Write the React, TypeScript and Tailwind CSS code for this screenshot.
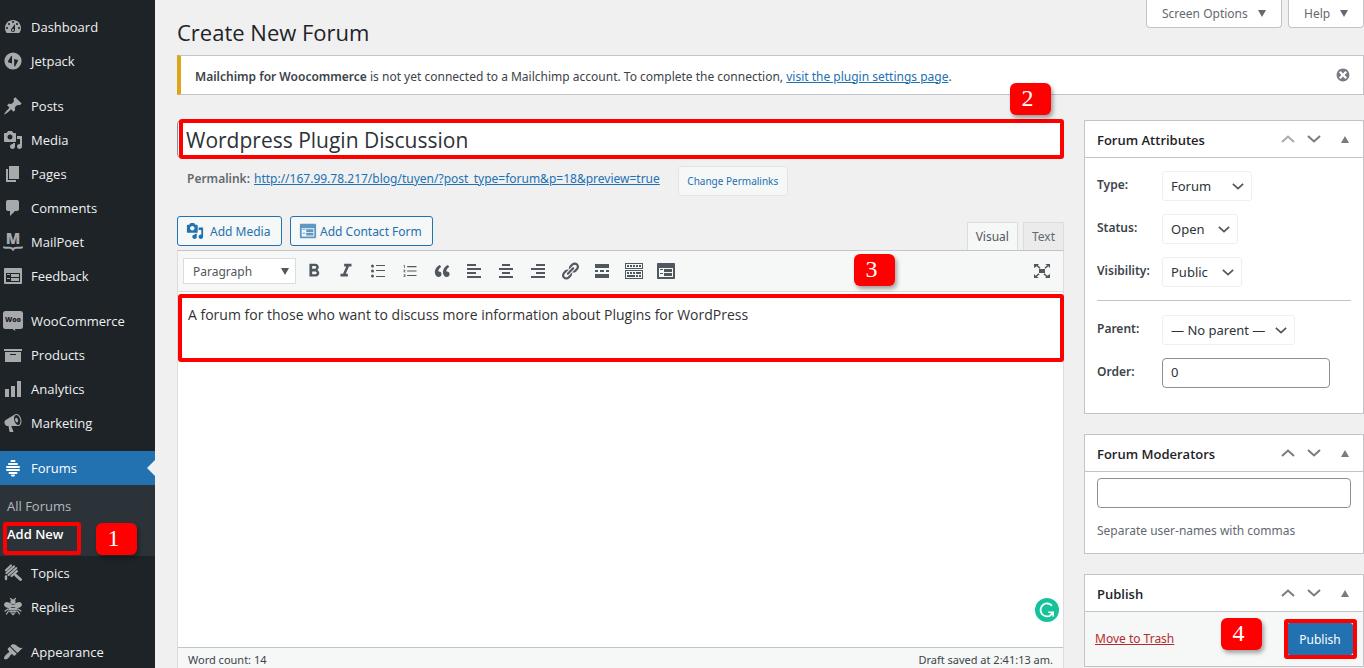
import React from 'react';
import { AiOutlineOrderedList } from 'react-icons/ai';
import { MdFormatBold, MdFormatItalic } from 'react-icons/md';

type IconProps = { className?: string };

const PATHS = {
  dashboard:
    'M3.76 16h12.48c1.1-1.37 1.76-3.11 1.76-5 0-4.42-3.58-8-8-8s-8 3.58-8 8c0 1.89.66 3.63 1.76 5zM10 4c.55 0 1 .45 1 1s-.45 1-1 1-1-.45-1-1 .45-1 1-1zM6 6c.55 0 1 .45 1 1s-.45 1-1 1-1-.45-1-1 .45-1 1-1zm8 0c.55 0 1 .45 1 1s-.45 1-1 1-1-.45-1-1 .45-1 1-1zm-5.37 5.55L12 7v6c0 1.1-.9 2-2 2s-2-.9-2-2c0-.57.24-1.08.63-1.45zM4 10c.55 0 1 .45 1 1s-.45 1-1 1-1-.45-1-1 .45-1 1-1zm12 0c.55 0 1 .45 1 1s-.45 1-1 1-1-.45-1-1 .45-1 1-1zm-5 3c0-.55-.45-1-1-1s-1 .45-1 1 .45 1 1 1 1-.45 1-1z',
  pin: 'M10.44 3.02l1.82-1.82 6.36 6.35-1.83 1.82c-1.05-.68-2.48-.57-3.41.36l-.75.75c-.92.93-1.04 2.35-.35 3.41l-1.83 1.82-2.41-2.41-2.8 2.79c-.42.42-3.38 2.71-3.8 2.29s1.86-3.39 2.28-3.81l2.79-2.79L4.1 9.36l1.83-1.82c1.05.69 2.48.57 3.4-.36l.75-.75c.93-.92 1.05-2.35.36-3.41z',
  media:
    'M13 11V4c0-.55-.45-1-1-1h-1.67L9 1H5L3.67 3H2c-.55 0-1 .45-1 1v7c0 .55.45 1 1 1h10c.55 0 1-.45 1-1zM7 4.5c1.38 0 2.5 1.12 2.5 2.5S8.38 9.5 7 9.5 4.5 8.38 4.5 7 5.62 4.5 7 4.5zM14 6h5v10.5c0 1.38-1.12 2.5-2.5 2.5S14 17.88 14 16.5s1.12-2.5 2.5-2.5c.17 0 .34.02.5.05V9h-3V6zm-4 8.05V13h2v3.5c0 1.38-1.12 2.5-2.5 2.5S7 17.88 7 16.5 8.12 14 9.5 14c.17 0 .34.02.5.05z',
  page: 'M6 15V2h10v13H6zm-1 1h8v2H3V5h2v11z',
  comments: 'M5 2h9c1.1 0 2 .9 2 2v7c0 1.1-.9 2-2 2h-2l-5 5v-5H5c-1.1 0-2-.9-2-2V4c0-1.1.9-2 2-2z',
  feedback:
    'M2 2h16c.55 0 1 .45 1 1v14c0 .55-.45 1-1 1H2c-.55 0-1-.45-1-1V3c0-.55.45-1 1-1zm15 14V7H3v9h14zM4 8v1h3V8H4zm4 0v3h8V8H8zm-4 4v1h3v-1H4zm4 0v3h8v-3H8z',
  archive: 'M19 4v2H1V4h18zM2 7h16v10H2V7zm11 3V9H7v1h6z',
  chart: 'M18 18V2h-4v16h4zm-6 0V7H8v11h4zm-6 0v-8H2v8h4z',
  megaphone:
    'M18.15 5.94c.46 1.62.38 3.22-.02 4.48-.42 1.28-1.26 2.18-2.3 2.48-.16.06-.26.06-.4.06-.06.02-.12.02-.18.02-.06.02-.14.02-.22.02h-6.8l2.22 5.5c.02.14-.06.26-.14.34-.08.1-.24.16-.34.16H6.95c-.1 0-.26-.06-.34-.16-.08-.08-.16-.2-.14-.34l-1-5.5H4.25l-.02-.02c-.5.06-1.08-.18-1.54-.62s-.88-1.08-1.06-1.88c-.24-.8-.2-1.56-.02-2.2.18-.62.58-1.08 1.06-1.3l.02-.02 9-5.4c.1-.06.18-.1.24-.16.06-.04.14-.08.24-.12.16-.08.28-.12.5-.18 1.04-.3 2.24.1 3.22.98s1.84 2.24 2.26 3.86zm-2.58 5.98h-.02c.4-.1.74-.34 1.04-.7.58-.7.86-1.76.86-3.04 0-.64-.1-1.3-.28-1.98-.34-1.36-1.02-2.5-1.78-3.24s-1.68-1.1-2.46-.88c-.82.22-1.4.96-1.7 2-.32 1.04-.28 2.36.06 3.72.38 1.36 1 2.5 1.8 3.24.78.74 1.62 1.1 2.48.88zm-2.54-7.08c.22-.04.42-.02.62.04.38.16.76.48 1.02 1s.42 1.2.42 1.78c0 .3-.04.56-.12.8-.18.48-.44.84-.86.94-.34.1-.8-.06-1.14-.4s-.64-.86-.78-1.5c-.18-.62-.12-1.24.02-1.72s.48-.84.82-.94z',
  appearance:
    'M14.48 11.06L7.41 3.99l1.5-1.5c.5-.56 2.3-.47 3.51.32 1.21.8 1.43 1.28 2.91 2.1 1.18.64 2.45 1.26 4.45.85zm-.71.71L6.7 4.7 4.93 6.47c-.39.39-.39 1.02 0 1.41l1.06 1.06c.39.39.39 1.03 0 1.42-.6.6-1.43 1.11-2.21 1.69-.35.26-.7.53-1.01.84C1.43 14.23.4 16.08 1.4 17.07c.99 1 2.84-.03 4.18-1.36.31-.31.58-.66.85-1.02.57-.78 1.08-1.61 1.69-2.21.39-.39 1.02-.39 1.41 0l1.06 1.06c.39.39 1.02.39 1.41 0z',
  quote:
    'M9.49 13.22c0-.74-.2-1.38-.61-1.9-.62-.78-1.83-.88-2.53-.72-.29-1.65 1.11-3.75 2.92-4.65L7.88 4c-2.73 1.3-5.42 4.28-4.96 8.05C3.21 14.43 4.59 16 6.54 16c.85 0 1.56-.25 2.12-.75s.83-1.18.83-2.03zm8.05 0c0-.74-.2-1.38-.61-1.9-.63-.78-1.83-.88-2.53-.72-.29-1.65 1.11-3.75 2.92-4.65L15.93 4c-2.73 1.3-5.41 4.28-4.95 8.05.29 2.38 1.66 3.95 3.61 3.95.85 0 1.56-.25 2.12-.75s.83-1.18.83-2.03z',
  alignLeft: 'M12 5V3H3v2h9zm5 4V7H3v2h14zm-5 4v-2H3v2h9zm5 4v-2H3v2h14z',
  alignCenter: 'M14 5V3H6v2h8zm3 4V7H3v2h14zm-3 4v-2H6v2h8zm3 4v-2H3v2h14z',
  alignRight: 'M17 5V3H8v2h9zm0 4V7H3v2h14zm0 4v-2H8v2h9zm0 4v-2H3v2h14z',
  link: 'M17.74 2.76c1.68 1.69 1.68 4.41 0 6.1l-1.53 1.52c-1.12 1.12-2.7 1.47-4.14 1.09l2.62-2.61.76-.77.76-.76c.84-.84.84-2.2 0-3.04-.84-.85-2.2-.85-3.04 0l-.77.76-3.38 3.38c-.37-1.44-.02-3.02 1.1-4.14l1.52-1.53c1.69-1.68 4.42-1.68 6.1 0zM8.59 13.43l5.34-5.34c.42-.42.42-1.1 0-1.52-.44-.43-1.13-.39-1.53 0l-5.33 5.34c-.42.42-.42 1.1 0 1.52.44.43 1.13.39 1.52 0zm-.76 2.29l4.14-4.15c.38 1.44.03 3.02-1.09 4.14l-1.52 1.53c-1.69 1.68-4.41 1.68-6.1 0-1.68-1.68-1.68-4.42 0-6.1l1.53-1.52c1.12-1.12 2.7-1.47 4.14-1.1l-4.14 4.15c-.85.84-.85 2.2 0 3.05.84.84 2.2.84 3.04 0z',
  more: 'M17 7V3H3v4h14zM6 11V9H3v2h3zm6 0V9H8v2h4zm5 0V9h-3v2h3zm0 6v-4H3v4h14z',
  kitchenSink:
    'M19 2v6H1V2h18zm-1 5V3H2v4h16zM5 4v2H3V4h2zm3 0v2H6V4h2zm3 0v2H9V4h2zm3 0v2h-2V4h2zm3 0v2h-2V4h2zm2 5v9H1V9h18zm-1 8v-7H2v7h16zM5 11v2H3v-2h2zm3 0v2H6v-2h2zm3 0v2H9v-2h2zm6 0v2h-5v-2h5zm-6 3v2H3v-2h8zm3 0v2h-2v-2h2zm3 0v2h-2v-2h2z',
  fullscreen:
    'M2 3h5L5.8 4.200l2.800 2.500-1.100 1.100-2.800-2.500L2 7V3zm11 0h5v4l-1.700-1.700-2.800 2.500-1.100-1.100 2.800-2.500L13 3zM2 17v-4l1.700 1.700 2.800-2.500 1.100 1.100-2.800 2.500L7 17H2zm16 0h-5l1.200-1.200-2.800-2.500 1.100-1.100 2.800 2.500L18 13v4zM7 8h6v4H7V8z',
  dismiss:
    'M10 2c4.42 0 8 3.58 8 8s-3.58 8-8 8-8-3.58-8-8 3.58-8 8-8zm5 11l-3-3 3-3-2-2-3 3-3-3-2 2 3 3-3 3 2 2 3-3 3 3z',
};

const Dashicon = ({ name, className = 'size-5' }: { name: keyof typeof PATHS; className?: string }) => (
  <svg className={className} viewBox="0 0 20 20" fill="currentColor" aria-hidden="true">
    <path d={PATHS[name]} />
  </svg>
);

const JetpackIcon = () => (
  <svg className="size-5" viewBox="0 0 20 20" fill="currentColor" aria-hidden="true">
    <path
      fillRule="evenodd"
      d="M10 1.400a8.600 8.600 0 1 0 0 17.200 8.600 8.600 0 0 0 0-17.200zM9 5v7.400l-3.200-.8c-.8-.2-1.100-.8-.7-1.500L8 5.200zM11.200 15.500V8l2.900.7c.8.2 1.100.8.7 1.500L12.200 15.300z"
    />
  </svg>
);

const MailPoetIcon = () => (
  <svg className="size-5 overflow-visible" viewBox="0 0 20 20" fill="currentColor" aria-hidden="true">
    <text x="10" y="12" textAnchor="middle" fontFamily="Open Sans, sans-serif" fontWeight="800" fontSize="15">
      M
    </text>
    <path
      d="M1 15.300c2.400 1.400 5.600-.4 7.700.9l1.300 1.600 1.300-1.600c2.100-1.300 5.300.5 7.700-.9"
      fill="none"
      stroke="currentColor"
      strokeWidth="2"
      strokeLinecap="round"
      strokeLinejoin="round"
    />
  </svg>
);

const WooIcon = () => (
  <svg className="size-5" viewBox="0 0 20 20" fill="currentColor" aria-hidden="true">
    <path d="M2.500 0h15A2.500 2.500 0 0 1 20 2.500v13a2.500 2.500 0 0 1-2.500 2.500H12l.3 2L9.500 18h-7A2.500 2.500 0 0 1 0 15.500v-13A2.500 2.500 0 0 1 2.500 0z" />
    <text
      x="10"
      y="11"
      textAnchor="middle"
      fontFamily="Open Sans, sans-serif"
      fontWeight="800"
      fontSize="7"
      fill="#1d2327"
    >
      Woo
    </text>
  </svg>
);

const HiveIcon = () => (
  <svg
    className="size-5"
    viewBox="0 0 20 20"
    fill="none"
    stroke="currentColor"
    strokeWidth="2"
    strokeLinecap="round"
    aria-hidden="true"
  >
    <path d="M8.500 3h3M6 6h8M4 9h12M4 12h12M6.500 15h7M9 17.500h2" />
  </svg>
);

const TopicsIcon = () => (
  <svg className="size-5" viewBox="0 0 20 20" fill="none" stroke="currentColor" strokeLinecap="round" aria-hidden="true">
    <path d="M3 7.200L8 2.500M3.500 10l7.500-6.500M5.500 12L13.200 5.200M8.500 13L14 8.200" strokeWidth="2.200" />
    <path d="M12.500 12l5 4.500" strokeWidth="3" />
    <path d="M3 13.500v2.500" strokeWidth="2.400" />
  </svg>
);

const BeeIcon = () => (
  <svg className="size-5" viewBox="0 0 20 20" fill="currentColor" aria-hidden="true">
    <circle cx="10" cy="4.800" r="2.600" />
    <path d="M9 3L7.500 1.500M11 3l1.500-1.500" stroke="currentColor" strokeWidth="1.200" strokeLinecap="round" />
    <ellipse cx="5" cy="8.200" rx="4" ry="2.800" transform="rotate(20 5 8.200)" />
    <ellipse cx="15" cy="8.200" rx="4" ry="2.800" transform="rotate(-20 15 8.200)" />
    <path d="M6.500 8h7v2h-7zM5.600 10.700h8.800v2.200H5.600zM6 13.600h8l-.8 2H6.800zM7.500 16.300h5L10 18.600z" />
    <path d="M5 12l-3 2M15 12l3 2M5.500 14l-2 3M14.500 14l2 3" stroke="currentColor" strokeWidth="1.300" strokeLinecap="round" />
  </svg>
);

const BulletListIcon = () => (
  <svg className="size-5" viewBox="0 0 20 20" fill="currentColor" aria-hidden="true">
    <circle cx="4.500" cy="5" r="1.500" />
    <circle cx="4.500" cy="10" r="1.500" />
    <circle cx="4.500" cy="15" r="1.500" />
    <path d="M8 4h9v1H8zM8 9h9v1H8zM8 15h9v1H8z" />
  </svg>
);

const GrammarlyIcon = ({ className }: IconProps) => (
  <svg className={className} viewBox="0 0 24 24" aria-label="Grammarly">
    <circle cx="12" cy="12" r="12" fill="#15c39a" />
    <path d="M17 7.800a6.500 6.500 0 1 0-1 9.300" fill="none" stroke="#fff" strokeWidth="1.800" />
    <path d="M13.200 14.300h5v4.300M18 14.300l-3 3.300" fill="none" stroke="#fff" strokeWidth="1.600" />
  </svg>
);

const Chevron = ({ up = false, className = 'h-2 w-[14px]' }: { up?: boolean; className?: string }) => (
  <svg className={className} viewBox="0 0 14 8" fill="none" stroke="currentColor" strokeWidth="2" aria-hidden="true">
    <path d={up ? 'M1 7l6-5.500L13 7' : 'M1 1l6 5.500L13 1'} />
  </svg>
);

const Triangle = ({ up = false, className = '' }: { up?: boolean; className?: string }) => (
  <svg className={`h-[7px] w-2 ${className}`} viewBox="0 0 8 7" fill="currentColor" aria-hidden="true">
    <path d={up ? 'M0 7l4-7 4 7z' : 'M0 0h8L4 7z'} />
  </svg>
);

// Numbered step marker, placed over the part of the screen it explains
const Step = ({ n, className }: { n: number; className: string }) => (
  <span
    className={`absolute z-20 flex h-8 w-[41px] items-center justify-center rounded-md bg-[#fe0000] pr-[6px] pb-[2px] font-['Liberation_Serif',serif] text-2xl text-white shadow-[2px_3px_4px_rgba(0,0,0,0.35)] ${className}`}
  >
    {n}
  </span>
);

const Outline = ({ className }: { className: string }) => (
  <span className={`pointer-events-none absolute z-10 rounded-[3px] border-4 border-[#fe0000] ${className}`} />
);

const menuGroups = [
  [
    { label: 'Dashboard', icon: <Dashicon name="dashboard" /> },
    { label: 'Jetpack', icon: <JetpackIcon /> },
  ],
  [
    { label: 'Posts', icon: <Dashicon name="pin" /> },
    { label: 'Media', icon: <Dashicon name="media" /> },
    { label: 'Pages', icon: <Dashicon name="page" /> },
    { label: 'Comments', icon: <Dashicon name="comments" /> },
    { label: 'MailPoet', icon: <MailPoetIcon /> },
    { label: 'Feedback', icon: <Dashicon name="feedback" /> },
  ],
  [
    { label: 'WooCommerce', icon: <WooIcon /> },
    { label: 'Products', icon: <Dashicon name="archive" /> },
    { label: 'Analytics', icon: <Dashicon name="chart" /> },
    { label: 'Marketing', icon: <Dashicon name="megaphone" /> },
  ],
  [
    { label: 'Forums', icon: <HiveIcon />, current: true },
    { label: 'Topics', icon: <TopicsIcon /> },
    { label: 'Replies', icon: <BeeIcon /> },
  ],
  [{ label: 'Appearance', icon: <Dashicon name="appearance" /> }],
];

const Sidebar = () => (
  <nav className="flex w-[155px] shrink-0 flex-col gap-[11px] bg-[#1d2327] pt-[10px] font-['Open_Sans',sans-serif] text-[13px] text-[#f0f0f1]">
    {menuGroups.map((group, i) => (
      <ul key={i}>
        {group.map((item) => (
          <li key={item.label}>
            <a
              href="#"
              className={`relative flex h-[34px] items-center gap-2 pl-[3px] ${
                item.current ? 'bg-[#2271b1] text-white' : ''
              }`}
            >
              <span className={item.current ? 'text-white' : 'text-[#a7aaad]'}>{item.icon}</span>
              <span className="pt-[2px]">{item.label}</span>
              {item.current && (
                <span className="absolute right-0 border-y-8 border-r-8 border-y-transparent border-r-[#f0f0f1]" />
              )}
            </a>
            {item.current && (
              <ul className="relative bg-[#2c3338] pt-[7px] pb-2 pl-[7px] leading-7">
                <li>
                  <a href="#" className="text-[#b4b9be]">
                    All Forums
                  </a>
                </li>
                <li>
                  <a href="#" className="font-semibold text-white">
                    Add New
                  </a>
                </li>
                <Outline className="bottom-px left-[3px] h-[33px] w-[78px]" />
                <Step n={1} className="bottom-px left-24" />
              </ul>
            )}
          </li>
        ))}
      </ul>
    ))}
  </nav>
);

const tools = [
  { label: 'Bold', icon: <MdFormatBold className="size-[22px]" /> },
  { label: 'Italic', icon: <MdFormatItalic className="size-[22px]" /> },
  { label: 'Bulleted list', icon: <BulletListIcon /> },
  { label: 'Numbered list', icon: <AiOutlineOrderedList className="size-4" /> },
  { label: 'Blockquote', icon: <Dashicon name="quote" /> },
  { label: 'Align left', icon: <Dashicon name="alignLeft" /> },
  { label: 'Align center', icon: <Dashicon name="alignCenter" /> },
  { label: 'Align right', icon: <Dashicon name="alignRight" /> },
  { label: 'Insert link', icon: <Dashicon name="link" /> },
  { label: 'Read More tag', icon: <Dashicon name="more" /> },
  { label: 'Toolbar Toggle', icon: <Dashicon name="kitchenSink" /> },
  { label: 'Add contact form', icon: <Dashicon name="feedback" /> },
];

const Editor = () => (
  <section className="flex flex-1 flex-col">
    <div className="flex items-end justify-between">
      <div className="mb-1 flex gap-2 text-[#2271b1]">
        <button className="flex h-[30px] w-[105px] items-center gap-[6px] rounded-[3px] border border-[#2271b1] bg-[#f6f7f7] px-2">
          <Dashicon name="media" className="size-[18px]" />
          <span className="pt-px">Add Media</span>
        </button>
        <button className="flex h-[30px] w-[143px] items-center gap-[3px] rounded-[3px] border border-[#2271b1] bg-[#f6f7f7] px-2">
          <Dashicon name="feedback" className="size-[18px] opacity-70" />
          <span className="pt-px">Add Contact Form</span>
        </button>
      </div>
      <div className="flex gap-[5px] text-[#646970]">
        <button className="relative -mb-px h-[29px] border border-b-0 border-[#dcdcde] bg-[#f6f7f7] px-2 text-[#50575e]">
          Visual
        </button>
        <button className="h-7 border border-b-0 border-[#dcdcde] bg-[#ebebeb] px-2">Text</button>
      </div>
    </div>

    <div className="relative flex flex-1 flex-col border border-b-0 border-[#dcdcde] border-t-[#c3c4c7] bg-white">
      <div className="flex h-[41px] shrink-0 items-center border-b border-[#dcdcde] bg-[#f6f7f7] px-[5px] text-[#50575e]">
        <div className="relative mr-[2px]">
          <select
            aria-label="Block format"
            className="h-[26px] w-[113px] appearance-none border border-[#dcdcde] bg-white pt-px pl-[9px] text-[#50575e]"
          >
            <option>Paragraph</option>
          </select>
          <Triangle className="pointer-events-none absolute top-[10px] right-[7px]" />
        </div>
        {tools.map((tool) => (
          <button key={tool.label} aria-label={tool.label} className="flex h-7 w-8 items-center justify-center">
            {tool.icon}
          </button>
        ))}
        <button aria-label="Distraction-free mode" className="ml-auto flex h-7 w-8 items-center justify-center">
          <Dashicon name="fullscreen" />
        </button>
      </div>
      <Step n={3} className="top-[3px] right-[168px]" />

      <div className="relative flex-1">
        <textarea
          aria-label="Forum content"
          className="block size-full resize-none px-[10px] pt-[11px] font-['Open_Sans',sans-serif] text-sm leading-6 text-[#333] outline-none"
          defaultValue="A forum for those who want to discuss more information about Plugins for WordPress"
        />
        <Outline className="top-[2px] -right-px left-0 h-[68px]" />
        <GrammarlyIcon className="absolute right-1 bottom-[25px] size-6" />
      </div>

      <div className="flex h-[21px] shrink-0 justify-between border-t border-[#c3c4c7] bg-[#f6f7f7] px-[10px] pt-[2px] text-[11px] leading-5 text-[#3c434a]">
        <span>Word count: 14</span>
        <span>Draft saved at 2:41:13 am.</span>
      </div>
    </div>
  </section>
);

const Panel = ({
  title,
  first = false,
  children,
}: {
  title: string;
  first?: boolean;
  children: React.ReactNode;
}) => (
  <section className="border border-[#c3c4c7] bg-white">
    <header className="flex h-[37px] items-center border-b border-[#c3c4c7] pr-[14px] pl-3 text-[#787c82]">
      <h2 className="flex-1 pt-[3px] font-['Open_Sans',sans-serif] text-[13px] font-semibold text-[#1d2327]">
        {title}
      </h2>
      <button aria-label="Move up" className={first ? 'text-[#a7aaad]' : ''}>
        <Chevron up />
      </button>
      <button aria-label="Move down" className="ml-3">
        <Chevron />
      </button>
      <button aria-label="Toggle panel" className="ml-5">
        <Triangle up />
      </button>
    </header>
    {children}
  </section>
);

const SelectField = ({ label, value, width }: { label: string; value: string; width: string }) => (
  <div className="flex h-[30px]">
    <label htmlFor={label} className="w-[65px] leading-7 font-semibold text-[#3c434a]">
      {label}:
    </label>
    <div className={`relative ${width}`}>
      <select
        id={label}
        className="h-[30px] w-full appearance-none rounded-[3px] border border-[#f0f0f1] bg-white pt-px pl-2 text-[13px] text-[#2c3338]"
      >
        <option>{value}</option>
      </select>
      <Chevron className="pointer-events-none absolute top-3 right-2 h-[7px] w-3 text-[#50575e]" />
    </div>
  </div>
);

const Panels = () => (
  <aside className="flex w-[280px] shrink-0 flex-col gap-5">
    <Panel title="Forum Attributes" first>
      <div className="flex flex-col gap-[13px] px-3 pt-[13px] pb-[25px]">
        <SelectField label="Type" value="Forum" width="w-[90px]" />
        <SelectField label="Status" value="Open" width="w-[76px]" />
        <SelectField label="Visibility" value="Public" width="w-[80px]" />
        <hr className="h-[2px] border-[#c3c4c7]" />
        <SelectField label="Parent" value="— No parent —" width="w-[133px]" />
        <div className="flex h-[30px]">
          <label htmlFor="order" className="w-[65px] leading-7 font-semibold text-[#3c434a]">
            Order:
          </label>
          <input
            id="order"
            defaultValue="0"
            className="w-[168px] rounded border border-[#8c8f94] px-2 text-[13px] text-[#2c3338]"
          />
        </div>
      </div>
    </Panel>

    <Panel title="Forum Moderators">
      <div className="px-3 pt-[6px] pb-3 text-[#646970]">
        <input id="moderators" className="block h-[30px] w-full rounded border border-[#8c8f94] bg-white px-2" />
        <label htmlFor="moderators" className="mt-[13px] block leading-5">
          Separate user-names with commas
        </label>
      </div>
    </Panel>

    <Panel title="Publish">
      <div className="relative flex items-center justify-between bg-[#f6f7f7] px-[10px] py-[11px]">
        <a href="#" className="text-[#b32d2e] underline">
          Move to Trash
        </a>
        <button className="h-8 w-[66px] rounded-[3px] bg-[#2271b1] pt-px text-white">Publish</button>
        <Step n={4} className="top-[6px] right-[101px]" />
        <Outline className="top-[7px] right-[6px] h-10 w-[73px]" />
      </div>
    </Panel>
  </aside>
);

export default function App() {
  return (
    <div className="flex h-screen overflow-hidden bg-[#f0f0f1] font-['Noto_Sans',sans-serif] text-xs text-[#3c434a]">
      <Sidebar />
      <main className="flex min-w-0 flex-1 flex-col pl-[22px]">
        <header className="flex h-[55px] items-start justify-between">
          <h1 className="pt-[17px] font-['Open_Sans',sans-serif] text-[22px] leading-[30px] text-[#1d2327]">
            Create New Forum
          </h1>
          <div className="flex gap-[6px] text-[#646970]">
            <button className="flex h-7 w-[136px] items-center justify-between rounded-b border border-t-0 border-[#c3c4c7] bg-white px-[15px]">
              Screen Options <Triangle />
            </button>
            <button className="flex h-7 w-[76px] items-center justify-between rounded-b border border-t-0 border-[#c3c4c7] bg-white px-[15px]">
              Help <Triangle />
            </button>
          </div>
        </header>

        <div className="flex h-10 shrink-0 items-center border border-l-4 border-[#c3c4c7] border-l-[#dba617] bg-white pr-3 pl-[14px]">
          <p className="flex-1 pt-[3px]">
            <strong className="font-semibold">Mailchimp for Woocommerce</strong> is not yet connected to a Mailchimp
            account. To complete the connection,{' '}
            <a href="#" className="text-[#2271b1] underline">
              visit the plugin settings page
            </a>
            .
          </p>
          <button aria-label="Dismiss this notice" className="text-[#787c82]">
            <Dashicon name="dismiss" className="size-4" />
          </button>
        </div>

        <div className="mt-[25px] flex flex-1 gap-5">
          <div className="flex min-w-0 flex-1 flex-col">
            <div className="relative">
              <input
                aria-label="Forum title"
                defaultValue="Wordpress Plugin Discussion"
                className="block h-[38px] w-full rounded border border-[#8c8f94] bg-white px-2 pt-[2px] font-['Open_Sans',sans-serif] text-[21px] text-[#2c3338]"
              />
              <Outline className="-top-px right-0 left-[2px] h-10" />
              <Step n={2} className="-top-[37px] right-[13px]" />
            </div>
            <div className="mt-2 mb-5 flex h-[30px] items-start pl-[10px] leading-[26px]">
              <span className="mr-1 font-semibold text-[#646970]">Permalink:</span>
              <a href="#" className="text-[#2271b1] underline">
                http://167.99.78.217/blog/tuyen/?post_type=forum&amp;p=18&amp;preview=true
              </a>
              <button className="ml-[18px] h-[30px] w-[110px] rounded-[3px] border border-[#e4e5e7] bg-[#f6f7f7] text-[10px] text-[#2271b1]">
                Change Permalinks
              </button>
            </div>
            <Editor />
          </div>
          <Panels />
        </div>
      </main>
    </div>
  );
}
